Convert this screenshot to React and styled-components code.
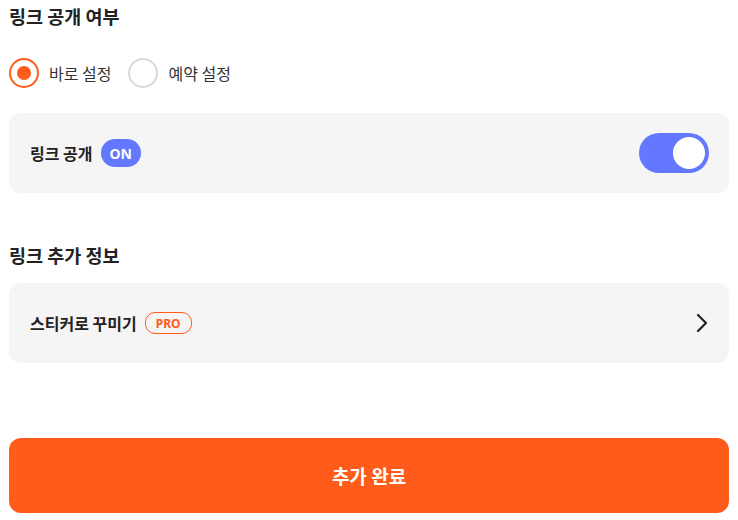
import React, { useState } from "react";
import styled, { createGlobalStyle } from "styled-components";

const GlobalStyle = createGlobalStyle`
  body {
    margin: 0;
    background: #fff;
    font-family: "Noto Sans CJK KR", "Noto Sans", sans-serif;
    color: #222;
  }
`;

export default function App() {
  const [mode, setMode] = useState("now");
  const [open, setOpen] = useState(true);
  return (
    <Wrapper>
      <GlobalStyle />
      <Title>링크 공개 여부</Title>
      <RadioRow>
        <RadioItem onClick={() => setMode("now")}>
          <RadioCircle checked={mode === "now"} />
          바로 설정
        </RadioItem>
        <RadioItem onClick={() => setMode("reserve")}>
          <RadioCircle checked={mode === "reserve"} />
          예약 설정
        </RadioItem>
      </RadioRow>
      <Card>
        <Label>
          링크 공개
          <OnBadge>{open ? "ON" : "OFF"}</OnBadge>
        </Label>
        <Toggle on={open} onClick={() => setOpen(!open)}>
          <Knob />
        </Toggle>
      </Card>
      <Title2>링크 추가 정보</Title2>
      <Card>
        <Label>
          스티커로 꾸미기
          <ProBadge>PRO</ProBadge>
        </Label>
        <svg width="14" height="20" viewBox="0 0 14 20" fill="none">
          <path d="M3 2l8 8-8 8" stroke="#222" strokeWidth="2.2" strokeLinecap="round" strokeLinejoin="round" />
        </svg>
      </Card>
      <SubmitButton>추가 완료</SubmitButton>
    </Wrapper>
  );
}

const Wrapper = styled.div`
  padding: 3px 9px 0;
  display: flex;
  flex-direction: column;
`;
const Title = styled.h2`
  margin: 0;
  font-size: 18.5px;
  font-weight: 700;
  line-height: 26px;
  color: #222;
`;
const Title2 = styled(Title)`
  margin-top: 49px;
  margin-bottom: 15px;
`;
const RadioRow = styled.div`
  display: flex;
  gap: 17px;
  margin-top: 29px;
  margin-bottom: 25px;
`;
const RadioItem = styled.label`
  display: flex;
  align-items: center;
  gap: 10px;
  font-size: 16px;
  color: #333;
  cursor: pointer;
  height: 30px;
`;
const RadioCircle = styled.span`
  width: 30px;
  height: 30px;
  box-sizing: border-box;
  border-radius: 50%;
  border: 2px solid ${(p) => (p.checked ? "#FF5B1A" : "#d9d9d9")};
  display: flex;
  align-items: center;
  justify-content: center;
  &::after {
    content: "";
    width: 14px;
    height: 14px;
    border-radius: 50%;
    background: #FF5B1A;
    display: ${(p) => (p.checked ? "block" : "none")};
  }
`;
const Card = styled.div`
  background: #f5f5f5;
  border-radius: 12px;
  height: 80px;
  box-sizing: border-box;
  padding: 0 20px 0 21px;
  display: flex;
  align-items: center;
  justify-content: space-between;
`;
const Label = styled.div`
  display: flex;
  align-items: center;
  gap: 8px;
  font-size: 16px;
  font-weight: 700;
  color: #222;
`;
const OnBadge = styled.span`
  height: 28px;
  padding: 0 9px;
  border-radius: 14px;
  background: #6478ff;
  color: #fff;
  font-family: "Noto Sans", sans-serif;
  font-size: 14px;
  font-weight: 700;
  display: flex;
  align-items: center;
`;
const ProBadge = styled.span`
  height: 20px;
  padding: 0 10px;
  border-radius: 10px;
  border: 1px solid #FF5B1A;
  color: #FF5B1A;
  font-family: "Noto Sans", sans-serif;
  font-size: 12px;
  font-weight: 700;
  display: flex;
  align-items: center;
`;
const Toggle = styled.div`
  width: 70px;
  height: 40px;
  border-radius: 20px;
  background: ${(p) => (p.on ? "#6478ff" : "#ccc")};
  display: flex;
  align-items: center;
  justify-content: ${(p) => (p.on ? "flex-end" : "flex-start")};
  padding: 0 4px;
  box-sizing: border-box;
  cursor: pointer;
`;
const Knob = styled.span`
  width: 32px;
  height: 32px;
  border-radius: 50%;
  background: #fff;
`;
const SubmitButton = styled.button`
  margin-top: 75px;
  height: 75px;
  border: none;
  border-radius: 12px;
  background: #FF5B1A;
  color: #fff;
  font-family: "Noto Sans CJK KR", sans-serif;
  font-size: 19px;
  font-weight: 700;
  cursor: pointer;
`;
